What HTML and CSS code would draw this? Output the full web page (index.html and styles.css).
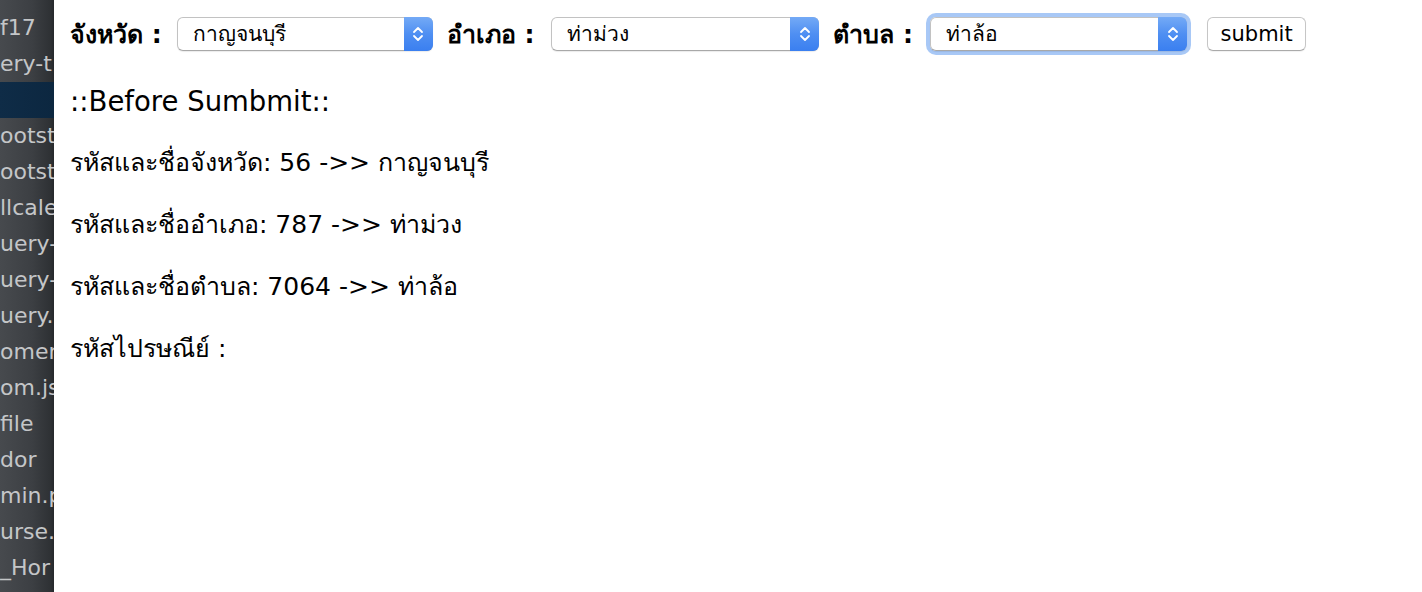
FILE: index.html
```html
<!DOCTYPE html>
<html lang="th">
<head>
<meta charset="utf-8">
<title>Address form</title>
<link rel="stylesheet" href="styles.css">
</head>
<body>
<div class="app">
  <aside class="sidebar">
    <ul class="files">
      <li>ts</li>
      <li>f17</li>
      <li>ery-t</li>
      <li class="selected">&nbsp;</li>
      <li>ootstr</li>
      <li>ootstr</li>
      <li>llcale</li>
      <li>uery-</li>
      <li>uery-</li>
      <li>uery.</li>
      <li>omer</li>
      <li>om.js</li>
      <li>file</li>
      <li>dor</li>
      <li>min.p</li>
      <li>urse.p</li>
      <li>_Hor</li>
    </ul>
  </aside>
  <main class="main">
    <form class="form">
      <label class="label first" for="province">จังหวัด :</label>
      <span class="select-wrap w1">
        <select id="province" class="select"><option>กาญจนบุรี</option></select>
        <span class="arrow"><svg width="12" height="18" viewBox="0 0 12 18"><path d="M2 7 L6 3 L10 7 M2 11 L6 15 L10 11" fill="none" stroke="#fff" stroke-width="1.8" stroke-linecap="round" stroke-linejoin="round"/></svg></span>
      </span>
      <label class="label" for="amphur">อำเภอ :</label>
      <span class="select-wrap w2">
        <select id="amphur" class="select"><option>ท่าม่วง</option></select>
        <span class="arrow"><svg width="12" height="18" viewBox="0 0 12 18"><path d="M2 7 L6 3 L10 7 M2 11 L6 15 L10 11" fill="none" stroke="#fff" stroke-width="1.8" stroke-linecap="round" stroke-linejoin="round"/></svg></span>
      </span>
      <label class="label" for="tambon">ตำบล :</label>
      <span class="select-wrap w3 focused">
        <select id="tambon" class="select"><option>ท่าล้อ</option></select>
        <span class="arrow"><svg width="12" height="18" viewBox="0 0 12 18"><path d="M2 7 L6 3 L10 7 M2 11 L6 15 L10 11" fill="none" stroke="#fff" stroke-width="1.8" stroke-linecap="round" stroke-linejoin="round"/></svg></span>
      </span>
      <button type="button" class="submit">submit</button>
    </form>
    <div class="results">
      <p class="line heading">::Before Sumbmit::</p>
      <p class="line">รหัสและชื่อจังหวัด: 56 -&gt;&gt; กาญจนบุรี</p>
      <p class="line">รหัสและชื่ออำเภอ: 787 -&gt;&gt; ท่าม่วง</p>
      <p class="line">รหัสและชื่อตำบล: 7064 -&gt;&gt; ท่าล้อ</p>
      <p class="line">รหัสไปรษณีย์ :</p>
    </div>
  </main>
</div>
</body>
</html>
```
FILE: styles.css
```css
html, body {
  margin: 0;
  padding: 0;
  height: 100%;
  background: #fff;
}
body {
  font-family: "DejaVu Sans", "Noto Sans", sans-serif;
  color: #000;
}
.app {
  display: flex;
  height: 592px;
  overflow: hidden;
}
.sidebar {
  width: 54px;
  flex: none;
  background: linear-gradient(90deg, #474a4e 0%, #3c3f43 60%, #2e3134 94%, #25282b 100%);
  overflow: hidden;
}
.files {
  list-style: none;
  margin: -26px 0 0 0;
  padding: 0;
}
.files li {
  height: 36px;
  line-height: 36px;
  font-size: 22px;
  color: #c4c6c8;
  white-space: nowrap;
  padding-left: 0;
}
.files li.selected {
  background: linear-gradient(90deg, #0f2c47 0%, #0c2740 100%);
}
.main {
  flex: 1;
  padding: 17px 16px 0 16px;
}
.form {
  display: flex;
  align-items: center;
  height: 34px;
}
.label {
  font-weight: bold;
  font-size: 25px;
  margin-right: 17px;
  white-space: nowrap;
}
.label.first {
  margin-right: 15px;
}
.select-wrap {
  position: relative;
  display: inline-flex;
  height: 34px;
  margin-right: 14px;
  border-radius: 6px;
}
.w1 { width: 256px; }
.w2 { width: 268px; }
.w3 { width: 257px; margin-right: 20px; }
.focused {
  box-shadow: 0 0 0 4px #a8c8f6;
}
.select {
  -webkit-appearance: none;
  appearance: none;
  width: 100%;
  height: 34px;
  box-sizing: border-box;
  border: 1px solid #c2c2c2;
  border-bottom-color: #a8a8a8;
  border-radius: 6px;
  background: #fff;
  padding: 0 36px 0 15px;
  font-family: "DejaVu Sans", "Noto Sans", sans-serif;
  font-size: 21px;
  color: #000;
  box-shadow: 0 1px 1px rgba(0,0,0,0.08);
}
.arrow {
  position: absolute;
  top: 0;
  right: 0;
  width: 29px;
  height: 34px;
  border-radius: 0 6px 6px 0;
  background: linear-gradient(180deg, #74aaf6 0%, #4f8ff2 50%, #3a7ff0 100%);
  display: flex;
  align-items: center;
  justify-content: center;
  pointer-events: none;
}
.submit {
  height: 34px;
  width: 99px;
  border: 1px solid #c6c6c6;
  border-bottom-color: #aaa;
  border-radius: 6px;
  background: #fff;
  font-family: "DejaVu Sans", "Noto Sans", sans-serif;
  font-size: 21px;
  color: #000;
  padding: 0;
  box-shadow: 0 1px 1px rgba(0,0,0,0.06);
}
.results {
  display: flex;
  flex-direction: column;
  gap: 30px;
  margin-top: 34px;
}
.line {
  margin: 0;
  font-size: 25px;
  line-height: 32px;
  white-space: nowrap;
}
.heading {
  font-size: 27.5px;
}
```
